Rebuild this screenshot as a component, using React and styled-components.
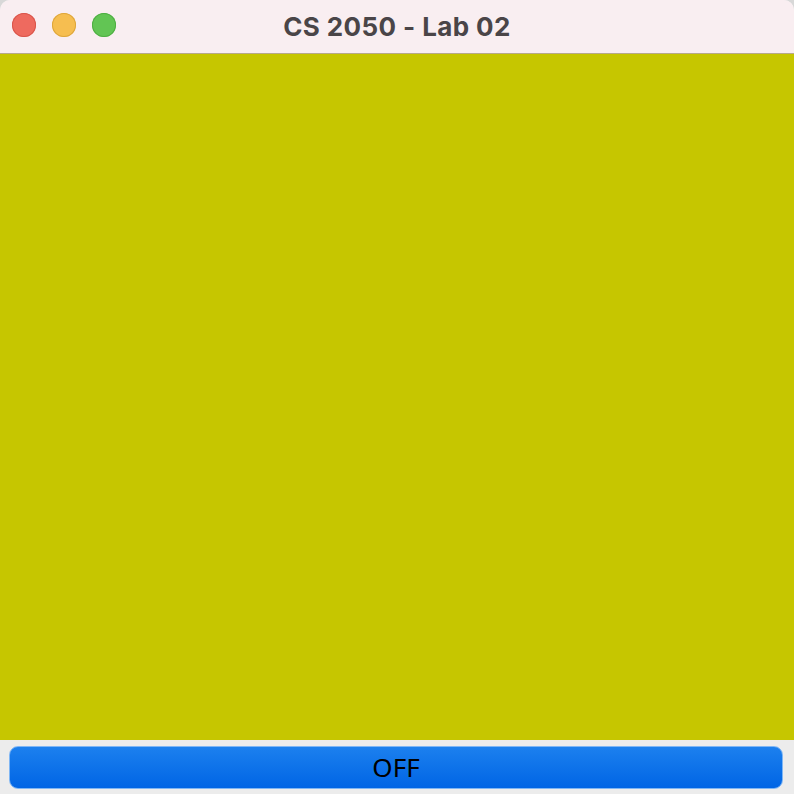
import styled, { createGlobalStyle } from 'styled-components'

const GlobalStyle = createGlobalStyle`
  html, body {
    margin: 0;
    padding: 0;
    background: #d8d8d8;
  }
  #root {
    height: 794px;
  }
`

const Window = styled.div`
  width: 794px;
  height: 794px;
  display: flex;
  flex-direction: column;
  border-radius: 10px 10px 0 0;
  overflow: hidden;
  background: #ececec;
`

const TitleBar = styled.div`
  height: 53px;
  flex: 0 0 53px;
  background: #f9eef1;
  border-bottom: 1px solid #b8a98a;
  position: relative;
  display: flex;
  align-items: center;
  justify-content: center;
`

const Lights = styled.div`
  position: absolute;
  left: 12px;
  top: 13px;
  display: flex;
  gap: 16px;
`

const Light = styled.span`
  width: 24px;
  height: 24px;
  border-radius: 50%;
  background: ${(props) => props.color};
  box-shadow: inset 0 0 0 1px ${(props) => props.edge};
`

const Title = styled.h1`
  margin: 0 0 1px;
  font-family: Inter, 'Noto Sans', sans-serif;
  font-weight: 700;
  font-size: 26px;
  color: #4a4548;
  letter-spacing: 0.4px;
`

const Canvas = styled.div`
  flex: 1;
  background: #c6c600;
`

const Footer = styled.div`
  flex: 0 0 54px;
  background: #ececec;
  display: flex;
  align-items: flex-start;
  padding: 6px 11px 0 9px;
  box-sizing: border-box;
`

const ToggleButton = styled.button`
  width: 100%;
  height: 43px;
  border: 1px solid #7fb6f4;
  border-radius: 9px;
  background: linear-gradient(#1c80ee, #0065e5);
  font-family: 'Noto Sans', 'Liberation Sans', sans-serif;
  font-size: 26px;
  line-height: 1;
  color: #000;
  padding: 0 0 2px;
  cursor: pointer;
`

const App = () => {
  return (
    <>
      <GlobalStyle />
      <Window>
        <TitleBar>
          <Lights>
            <Light color="#ee6a5f" edge="#d9564c" />
            <Light color="#f6be50" edge="#dea63c" />
            <Light color="#62c554" edge="#4fae43" />
          </Lights>
          <Title>CS 2050 - Lab 02</Title>
        </TitleBar>
        <Canvas />
        <Footer>
          <ToggleButton>OFF</ToggleButton>
        </Footer>
      </Window>
    </>
  )
}

export default App
